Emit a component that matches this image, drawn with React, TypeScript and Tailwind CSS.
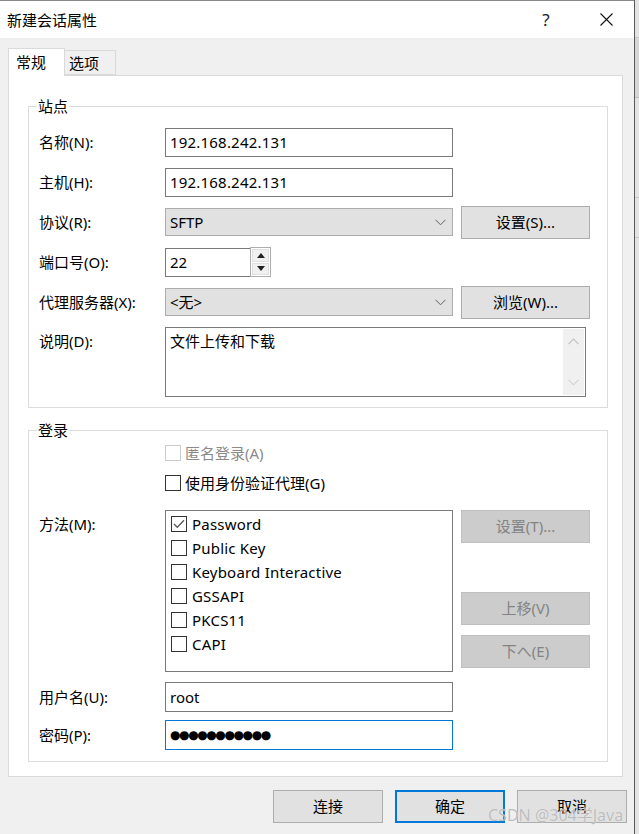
import React from "react";

const Chevron = ({ color = "#606060" }: { color?: string }) => (
  <svg width="11" height="7" viewBox="0 0 11 7" fill="none">
    <path d="M0.5 0.8 L5.5 5.8 L10.5 0.8" stroke={color} strokeWidth="1" />
  </svg>
);

const ChevronUp = ({ color = "#c2c2c2" }: { color?: string }) => (
  <svg width="11" height="7" viewBox="0 0 11 7" fill="none">
    <path d="M0.5 6.2 L5.5 1.2 L10.5 6.2" stroke={color} strokeWidth="1.2" />
  </svg>
);

const Check = () => (
  <svg width="12" height="10" viewBox="0 0 12 10" fill="none">
    <path d="M1 5 L4.3 8.3 L11 1.3" stroke="#5a5a5a" strokeWidth="1.3" />
  </svg>
);

function Box({ checked = false, disabled = false }: { checked?: boolean; disabled?: boolean }) {
  return (
    <div
      className={
        disabled
          ? "w-[16px] h-[16px] border border-[#cccccc] bg-white flex items-center justify-center shrink-0"
          : "w-[16px] h-[16px] border border-[#333333] bg-white flex items-center justify-center shrink-0"
      }
    >
      {checked && <Check />}
    </div>
  );
}

function Btn({ children, disabled = false }: { children: React.ReactNode; disabled?: boolean }) {
  return (
    <div
      className={
        disabled
          ? "w-[129px] h-[33px] bg-[#cccccc] border border-[#bfbfbf] text-[#838383] flex items-center justify-center"
          : "w-[129px] h-[33px] bg-[#e1e1e1] border border-[#adadad] text-black flex items-center justify-center"
      }
    >
      {children}
    </div>
  );
}

function Label({ children }: { children: React.ReactNode }) {
  return <div className="w-[136px] pl-[10px] shrink-0 leading-[20px]">{children}</div>;
}

export default function App() {
  const methods = ["Password", "Public Key", "Keyboard Interactive", "GSSAPI", "PKCS11", "CAPI"];
  return (
    <div className="w-[639px] h-[834px] flex bg-[#f0f0f0] text-[15px] text-black font-['Noto_Sans','Noto_Sans_CJK_SC',sans-serif] overflow-hidden">
      <div className="relative w-[635px] h-full flex flex-col border-r border-[#5a5a5a]">
        {/* title bar */}
        <div className="h-[38px] bg-white border-t border-[#8a8a8a] flex items-center pl-[7px] shrink-0">
          <div className="flex-1 leading-[20px] text-[15px]">新建会话属性</div>
          <div className="w-[30px] text-[17px] leading-[20px] text-[#222] mr-[38px] text-center">?</div>
          <div className="w-[14px] mr-[21px] flex items-center justify-center">
            <svg width="13" height="13" viewBox="0 0 13 13" fill="none">
              <path d="M0.5 0.5 L12.5 12.5 M12.5 0.5 L0.5 12.5" stroke="#111" strokeWidth="1.1" />
            </svg>
          </div>
        </div>

        {/* body */}
        <div className="flex-1 flex flex-col pl-[8px] pr-[9px]">
          {/* tabs */}
          <div className="h-[37px] flex items-end shrink-0 relative z-10">
            <div className="w-[57px] h-[28px] bg-white border border-b-0 border-[#d9d9d9] -mb-px pl-[7px] pt-[3px] leading-[20px]">
              常规
            </div>
            <div className="w-[51px] h-[25px] bg-[#f0f0f0] border border-l-0 border-[#d9d9d9] pl-[4px] pt-[2px] leading-[20px]">
              选项
            </div>
          </div>

          {/* panel */}
          <div className="w-[615px] h-[702px] bg-white border border-[#d9d9d9] pl-[19px] pr-[14px] pt-[30px] shrink-0">
            {/* 站点 group */}
            <div className="relative border border-[#dcdcdc] pt-[20px] pb-[10px] flex flex-col gap-[10px]">
              <div className="absolute -top-[11px] left-[8px] bg-white px-px leading-[20px]">站点</div>

              <div className="flex items-center h-[30px]">
                <Label>名称(N):</Label>
                <div className="w-[288px] h-[29px] border border-[#7a7a7a] bg-white pl-[4px] flex items-center tracking-[0.2px]">192.168.242.131</div>
              </div>
              <div className="flex items-center h-[30px]">
                <Label>主机(H):</Label>
                <div className="w-[288px] h-[29px] border border-[#7a7a7a] bg-white pl-[4px] flex items-center tracking-[0.2px]">192.168.242.131</div>
              </div>
              <div className="flex items-center h-[30px]">
                <Label>协议(R):</Label>
                <div className="w-[288px] h-[28px] border border-[#adadad] bg-[#e1e1e1] pl-[4px] pr-[6px] flex items-center">
                  <span className="flex-1">SFTP</span>
                  <Chevron />
                </div>
                <div className="ml-[8px]">
                  <Btn>设置(S)...</Btn>
                </div>
              </div>
              <div className="flex items-center h-[30px]">
                <Label>端口号(O):</Label>
                <div className="w-[85px] h-[29px] border border-[#7a7a7a] border-r-0 bg-white pl-[4px] flex items-center">22</div>
                <div className="w-[21px] h-[30px] border border-[#adadad] bg-white flex flex-col p-px gap-px">
                  <div className="flex-1 bg-[#f0f0f0] border border-[#e0e0e0] flex items-center justify-center">
                    <svg width="8" height="5" viewBox="0 0 8 5"><path d="M0 5 L4 0 L8 5 Z" fill="#222" /></svg>
                  </div>
                  <div className="flex-1 bg-[#f0f0f0] border border-[#e0e0e0] flex items-center justify-center">
                    <svg width="8" height="5" viewBox="0 0 8 5"><path d="M0 0 L4 5 L8 0 Z" fill="#222" /></svg>
                  </div>
                </div>
              </div>
              <div className="flex items-center h-[30px]">
                <Label>代理服务器(X):</Label>
                <div className="w-[288px] h-[28px] border border-[#adadad] bg-[#e1e1e1] pl-[4px] pr-[6px] flex items-center">
                  <span className="flex-1">&lt;无&gt;</span>
                  <Chevron />
                </div>
                <div className="ml-[8px]">
                  <Btn>浏览(W)...</Btn>
                </div>
              </div>
              <div className="flex items-start h-[70px]">
                <div className="pt-[4px]">
                  <Label>说明(D):</Label>
                </div>
                <div className="w-[421px] h-[70px] border border-[#7a7a7a] bg-white flex">
                  <div className="flex-1 pl-[4px] pt-[3px] leading-[20px]">文件上传和下载</div>
                  <div className="w-[21px] my-px mr-px bg-[#f0f0f0] flex flex-col items-center justify-between py-[9px]">
                    <ChevronUp />
                    <Chevron color="#c2c2c2" />
                  </div>
                </div>
              </div>
            </div>

            {/* 登录 group */}
            <div className="relative mt-[22px] border border-[#dcdcdc] pt-[14px] pb-[11px] flex flex-col">
              <div className="absolute -top-[11px] left-[8px] bg-white px-px leading-[20px]">登录</div>

              <div className="flex items-center h-[16px]">
                <div className="w-[136px] shrink-0" />
                <Box disabled />
                <span className="ml-[4px] text-[#8a8a8a] leading-[20px]">匿名登录(A)</span>
              </div>
              <div className="flex items-center h-[16px] mt-[14px]">
                <div className="w-[136px] shrink-0" />
                <Box />
                <span className="ml-[4px] leading-[20px]">使用身份验证代理(G)</span>
              </div>

              <div className="flex items-start mt-[19px]">
                <div className="pt-[4px]">
                  <Label>方法(M):</Label>
                </div>
                <div className="w-[288px] h-[162px] border border-[#7a7a7a] bg-white pl-[5px] pt-px flex flex-col">
                  {methods.map((m, i) => (
                    <div key={m} className="h-[24px] flex items-center">
                      <Box checked={i === 0} />
                      <span className="ml-[5px] leading-[20px] tracking-[0.2px]">{m}</span>
                    </div>
                  ))}
                </div>
                <div className="ml-[8px] flex flex-col">
                  <Btn disabled>设置(T)...</Btn>
                  <div className="mt-[49px]">
                    <Btn disabled>上移(V)</Btn>
                  </div>
                  <div className="mt-[10px]">
                    <Btn disabled>下へ(E)</Btn>
                  </div>
                </div>
              </div>

              <div className="flex items-center h-[30px] mt-[10px]">
                <Label>用户名(U):</Label>
                <div className="w-[288px] h-[30px] border border-[#7a7a7a] bg-white pl-[4px] flex items-center">root</div>
              </div>
              <div className="flex items-center h-[30px] mt-[8px]">
                <Label>密码(P):</Label>
                <div className="w-[288px] h-[30px] border border-[#0078d7] bg-white pl-[4px] flex items-center">
                  <span className="text-[12px] leading-[14px] tracking-[-1.4px] font-['DejaVu_Sans',sans-serif]">●●●●●●●●●●●</span>
                </div>
              </div>
            </div>
          </div>

          {/* bottom buttons */}
          <div className="flex justify-end gap-[12px] mt-[13px] -mr-[2px]">
            <div className="w-[110px] h-[33px] bg-[#e1e1e1] border border-[#adadad] flex items-center justify-center">连接</div>
            <div className="w-[110px] h-[33px] bg-[#e1e1e1] border-2 border-[#0078d7] flex items-center justify-center">确定</div>
            <div className="w-[110px] h-[33px] bg-[#e1e1e1] border border-[#adadad] flex items-center justify-center">取消</div>
          </div>
        </div>

        {/* watermark */}
        <div className="absolute left-[488px] top-[804px] text-[16px] leading-[22px] text-[#b8b8b8] opacity-90 [text-shadow:0_0_1px_#ffffff] pointer-events-none">
          CSDN @304学Java
        </div>
      </div>
      <div className="w-[4px] h-full bg-[#e3e3e3] flex flex-col">
        <div className="h-[38px] border-b border-[#c8c8c8]" />
        <div className="h-[60px] bg-[#d6d6d6] border-b border-[#bdbdbd]" />
        <div className="h-[100px] border-b border-[#c8c8c8]" />
        <div className="h-[40px] border-b border-[#c8c8c8]" />
      </div>
    </div>
  );
}
